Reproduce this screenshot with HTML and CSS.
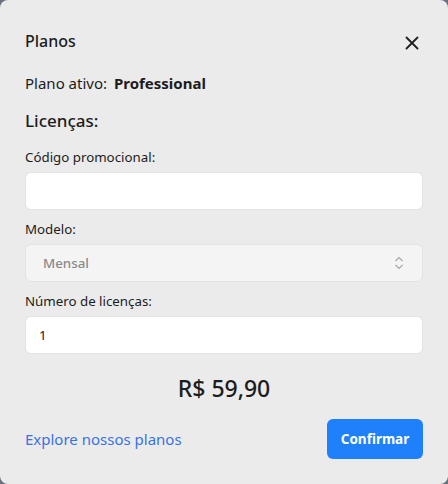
FILE: index.html
```html
<!DOCTYPE html>
<html lang="pt-BR">
<head>
    <meta charset="UTF-8">
    <meta name="viewport" content="width=device-width, initial-scale=1.0">
    <title>Planos</title>
    <link rel="stylesheet" href="styles.css">
</head>
<body>

<div class="modal">
    <div class="modal-header">
        <h2 class="modal-title">Planos</h2>
        <span class="close">
            <svg width="14" height="14" viewBox="0 0 14 14"><path d="M1.5 1.5l11 11M12.5 1.5l-11 11" stroke="#1f1f1f" stroke-width="1.8" stroke-linecap="round"/></svg>
        </span>
    </div>

    <p class="plan-active">Plano ativo: <strong>Professional</strong></p>

    <h3 class="section-title">Licenças:</h3>

    <label for="promo">Código promocional:</label>
    <input type="text" id="promo" class="field">

    <label for="model">Modelo:</label>
    <div class="select-box" id="model">
        <span>Mensal</span>
        <svg width="10" height="14" viewBox="0 0 10 14"><path d="M1.5 5l3.5-3.5 3.5 3.5M1.5 9l3.5 3.5 3.5-3.5" fill="none" stroke="#a8a8a8" stroke-width="1.2"/></svg>
    </div>

    <label for="qty">Número de licenças:</label>
    <input type="text" id="qty" class="field" value="1">

    <div class="price">R$ 59,90</div>

    <div class="modal-footer">
        <a href="#" class="explore">Explore nossos planos</a>
        <button>Confirmar</button>
    </div>
</div>

</body>
</html>
```

FILE: styles.css
```css
body {
    margin: 0;
    background-color: #6b7080;
    font-family: "Noto Sans", "Open Sans", sans-serif;
    color: #1c1c1c;
}
.modal {
    width: 448px;
    height: 484px;
    box-sizing: border-box;
    background-color: #ebebeb;
    border-radius: 8px;
    padding: 29px 25px 25px 25px;
    display: flex;
    flex-direction: column;
}
.modal-header {
    display: flex;
    justify-content: space-between;
    align-items: center;
    height: 24px;
}
.modal-title {
    margin: 0;
    font-size: 16px;
    font-weight: 500;
    line-height: 24px;
}
.close {
    display: flex;
    margin-right: 4px;
    margin-top: 4px;
}
.plan-active {
    margin: 20px 0 0 0;
    font-size: 15px;
    line-height: 20px;
}
.plan-active strong {
    margin-left: 3px;
    font-weight: 700;
}
.section-title {
    margin: 16px 0 0 0;
    font-size: 17px;
    font-weight: 500;
    line-height: 24px;
}
label {
    display: block;
    margin-top: 9px;
    font-size: 13.3px;
    line-height: 20px;
}
.section-title + label {
    margin-top: 14px;
}
.field,
.select-box {
    box-sizing: border-box;
    width: 100%;
    height: 38px;
    margin-top: 5px;
    border: 1px solid #e3e3e3;
    border-radius: 6px;
    background-color: #ffffff;
    padding: 0 13px;
    font-family: inherit;
    font-size: 13.3px;
    color: #1c1c1c;
    outline: none;
}
.select-box {
    display: flex;
    justify-content: space-between;
    align-items: center;
    background-color: #f4f4f4;
    padding: 0 18px 0 17px;
    color: #8a8a8a;
    font-weight: 500;
}
.price {
    margin-top: 19px;
    text-align: center;
    font-size: 23px;
    font-weight: 500;
    line-height: 30px;
}
.modal-footer {
    margin-top: 16px;
    display: flex;
    justify-content: space-between;
    align-items: center;
}
.explore {
    color: #3a72e4;
    text-decoration: none;
    font-size: 15px;
}
button {
    width: 96px;
    height: 40px;
    background-color: #1f80fc;
    color: #ffffff;
    border: none;
    border-radius: 6px;
    font-family: inherit;
    font-size: 13.5px;
    font-weight: 700;
    cursor: pointer;
}
```
